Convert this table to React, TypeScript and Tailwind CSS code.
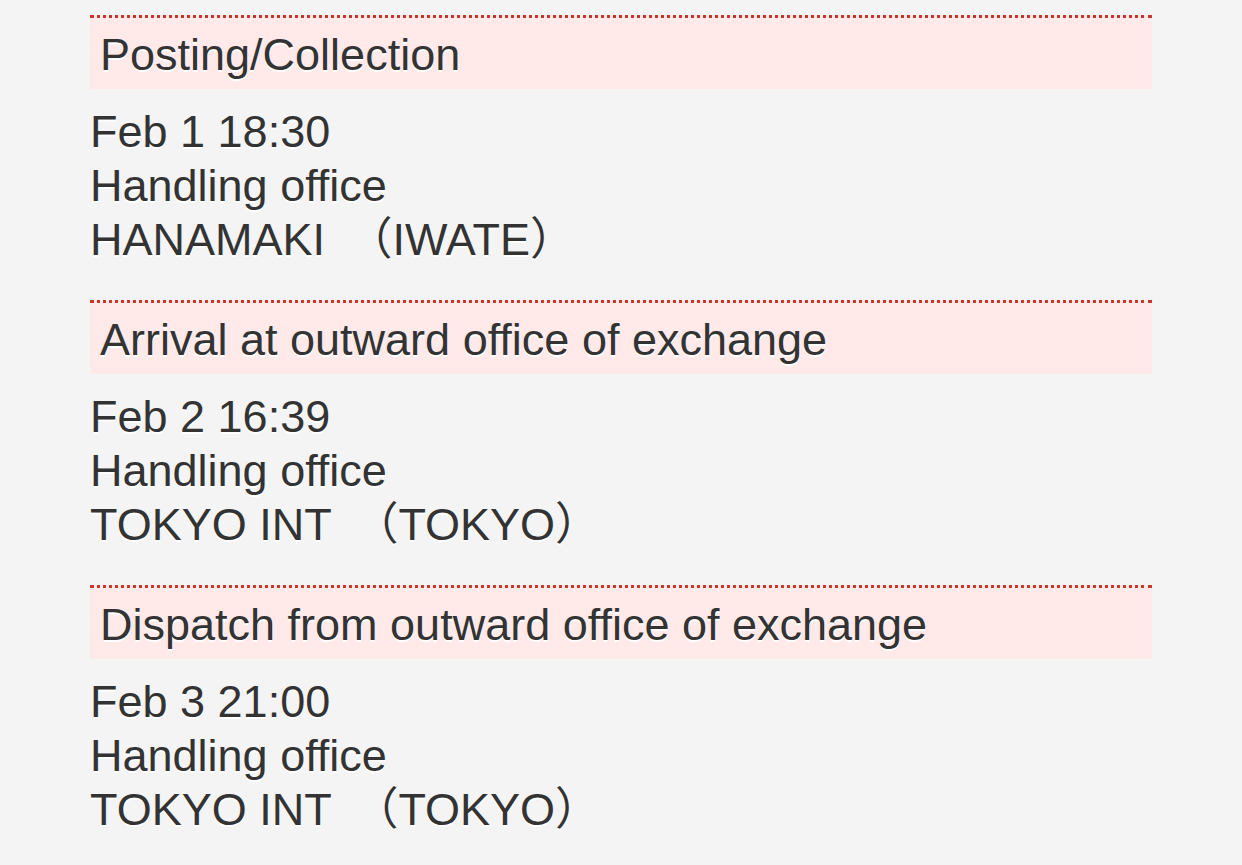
import React from "react";

const items = [
  { title: "Posting/Collection", date: "Feb 1 18:30", office: "HANAMAKI　（IWATE）" },
  { title: "Arrival at outward office of exchange", date: "Feb 2 16:39", office: "TOKYO INT　（TOKYO）" },
  { title: "Dispatch from outward office of exchange", date: "Feb 3 21:00", office: "TOKYO INT　（TOKYO）" },
];

export default function App() {
  return (
    <div
      className="min-h-screen bg-[#f4f4f4] px-[90px] pt-[15px] text-[#333333] text-[45px] leading-[54px] [text-shadow:0_1.5px_0_#ffffff]"
      style={{ fontFamily: '"Liberation Sans", Arial, "Noto Sans CJK JP", sans-serif' }}
    >
      {items.map((it) => (
        <div key={it.date}>
          <div className="border-t-[3px] border-dotted border-[#c33a2a] bg-[#ffe9e9] pl-[10px] pt-[10px] pb-[7px]">
            {it.title}
          </div>
          <div className="mt-[16px] mb-[33px]">
            <div>{it.date}</div>
            <div>Handling office</div>
            <div>{it.office}</div>
          </div>
        </div>
      ))}
    </div>
  );
}
